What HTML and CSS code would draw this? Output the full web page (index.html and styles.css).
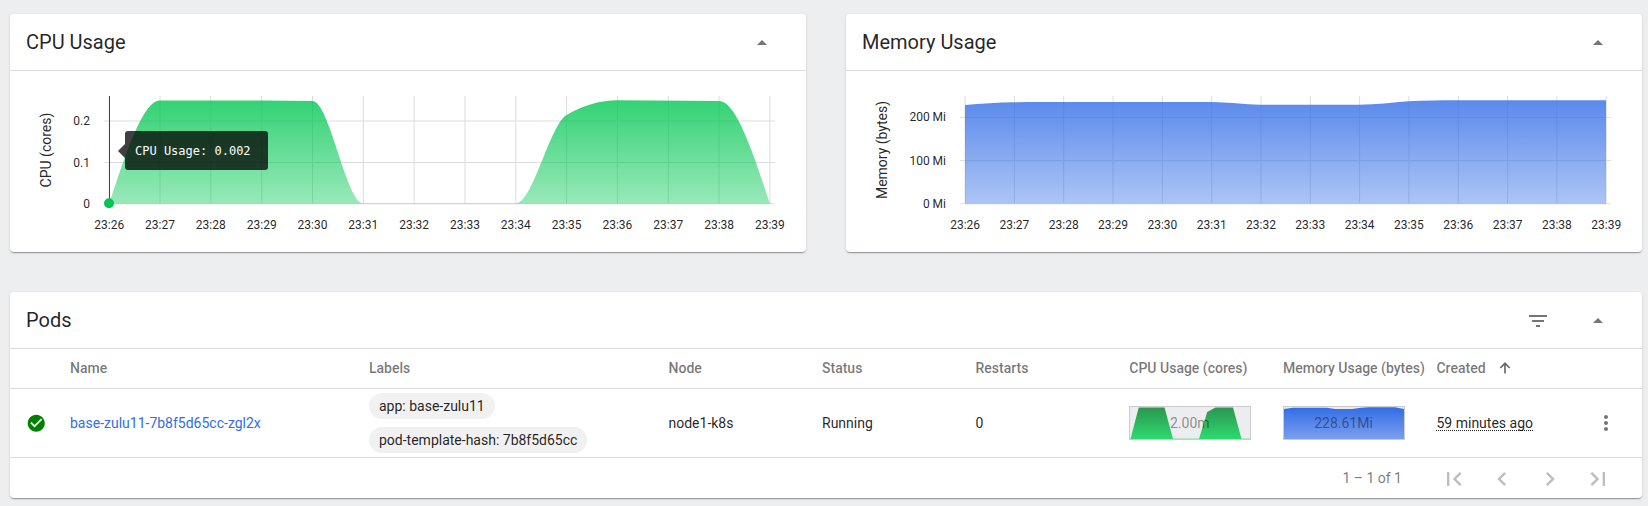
FILE: index.html
```html
<!DOCTYPE html>
<html lang="en">
<head>
<meta charset="utf-8">
<title>Pods</title>
<link rel="stylesheet" href="styles.css">
</head>
<body>
<main class="page">
  <div class="charts">
    <section class="card">
      <header class="card-header">
        <h2 class="title">CPU Usage</h2>
        <svg class="icon" viewBox="0 0 24 24"><path d="M7 14l5-5 5 5z"/></svg>
      </header>
      <div class="chart-body">
        <svg class="chart" id="cpu" viewBox="10 71 796 181">
          <defs><linearGradient id="cpuFill" x1="0" y1="0" x2="0" y2="1"><stop offset="0" stop-color="#00c752" stop-opacity=".8"/><stop offset="1" stop-color="#00c752" stop-opacity=".4"/></linearGradient></defs>
          <g class="grid"></g>
          <path fill="url(#cpuFill)" d="M109.2 203.8C126.2 152 143.2 100.5 160 100.5L261.7 100.5L312.5 101C329.4 101 346.4 203.3 363.3 203.3L515.8 203.3C532.7 203.3 549.7 124.8 566.6 115C583.5 105.2 600.5 100.3 617.4 100.3L719.1 101C736 101 753 152 769.9 203.8Z"/>
          <path class="cursor" d="M109.5 96V203"/>
          <circle cx="109" cy="203.2" r="5" fill="#00c752"/>
          <text class="axis" text-anchor="middle" transform="translate(51 150) rotate(-90)">CPU (cores)</text>
        </svg>
        <div class="tooltip">CPU Usage: 0.002</div>
      </div>
    </section>
    <section class="card">
      <header class="card-header">
        <h2 class="title">Memory Usage</h2>
        <svg class="icon" viewBox="0 0 24 24"><path d="M7 14l5-5 5 5z"/></svg>
      </header>
      <div class="chart-body">
        <svg class="chart" id="mem" viewBox="846 71 796 181">
          <defs><linearGradient id="memFill" x1="0" y1="0" x2="0" y2="1"><stop offset="0" stop-color="#326de6" stop-opacity=".8"/><stop offset="1" stop-color="#326de6" stop-opacity=".4"/></linearGradient></defs>
          <g class="grid"></g>
          <path fill="url(#memFill)" d="M965 105C981 103.500 998 102.600 1014.300 102.300C1031 102 1047 102 1063 102H1211.500C1228 102 1244.400 104.700 1260.800 104.700H1359.400C1376 104.700 1392 102.200 1408.700 101.200C1425 100.200 1441 100.200 1458 100.200H1606V203.800H965Z"/>
          <text class="axis" text-anchor="middle" transform="translate(887 150) rotate(-90)">Memory (bytes)</text>
        </svg>
      </div>
    </section>
  </div>

  <section class="card pods">
    <header class="card-header">
      <h2 class="title">Pods</h2>
      <svg class="icon filter" viewBox="0 0 24 24"><path d="M10 18h4v-2h-4v2zM3 6v2h18V6H3zm3 7h12v-2H6v2z"/></svg>
      <svg class="icon" viewBox="0 0 24 24"><path d="M7 14l5-5 5 5z"/></svg>
    </header>
    <div class="row head">
      <span></span><span>Name</span><span>Labels</span><span>Node</span><span>Status</span><span>Restarts</span><span>CPU Usage (cores)</span><span>Memory Usage (bytes)</span>
      <span class="sorted">Created<svg class="sort" viewBox="0 0 12 12"><path d="M6 11.500V2M1.300 6L6 1.300L10.700 6"/></svg></span><span></span>
    </div>
    <div class="row data">
      <svg class="ok" viewBox="0 0 24 24"><path d="M12 2C6.480 2 2 6.480 2 12s4.480 10 10 10 10-4.480 10-10S17.520 2 12 2zm-2 15l-5-5 1.410-1.410L10 14.170l7.590-7.590L19 8l-9 9z"/></svg>
      <a class="link">base-zulu11-7b8f5d65cc-zgl2x</a>
      <div class="chips"><span class="chip">app: base-zulu11</span><span class="chip">pod-template-hash: 7b8f5d65cc</span></div>
      <span>node1-k8s</span><span>Running</span><span>0</span>
      <div class="spark">
        <svg viewBox="0 0 120 32" preserveAspectRatio="none">
          <defs><linearGradient id="s1" x1="0" y1="0" x2="0" y2="1"><stop offset="0" stop-color="#2c9650"/><stop offset="1" stop-color="#2dd96e"/></linearGradient></defs>
          <path d="M42 31.500H120" stroke="#b5e8c8" stroke-width="1"/>
          <path fill="url(#s1)" d="M.5 32L8.700 .5H34.500L43 32ZM69 32L77.200 5L85.500 .5H103L111.500 32Z"/>
        </svg>
        <span class="spark-text">2.00m</span>
      </div>
      <div class="spark">
        <svg viewBox="0 0 120 32" preserveAspectRatio="none">
          <defs><linearGradient id="s2" x1="0" y1="0" x2="0" y2="1"><stop offset="0" stop-color="#326de6"/><stop offset="1" stop-color="#7b9fee"/></linearGradient></defs>
          <path fill="url(#s2)" d="M0 2L9 .8H43L51 2H68L77 .8L85 .3H111L120 2V32H0Z"/>
        </svg>
        <span class="spark-text">228.61Mi</span>
      </div>
      <span><span class="ago">59 minutes ago</span></span>
      <svg class="icon more" viewBox="0 0 24 24"><path d="M12 8c1.100 0 2-.9 2-2s-.9-2-2-2-2 .9-2 2 .9 2 2 2zm0 2c-1.100 0-2 .9-2 2s.9 2 2 2 2-.9 2-2-.9-2-2-2zm0 6c-1.100 0-2 .9-2 2s.9 2 2 2 2-.9 2-2-.9-2-2-2z"/></svg>
    </div>
    <footer class="pager">
      <span class="range">1 – 1 of 1</span>
      <svg viewBox="0 0 24 24"><path d="M18.410 16.590L13.820 12l4.590-4.590L17 6l-6 6 6 6zM6 6h2v12H6z"/></svg>
      <svg viewBox="0 0 24 24"><path d="M15.410 7.410L14 6l-6 6 6 6 1.410-1.410L10.830 12z"/></svg>
      <svg viewBox="0 0 24 24"><path d="M10 6L8.590 7.410 13.170 12l-4.580 4.590L10 18l6-6z"/></svg>
      <svg viewBox="0 0 24 24"><path d="M5.590 7.410L10.180 12l-4.590 4.590L7 18l6-6-6-6zM16 6h2v12h-2z"/></svg>
    </footer>
  </section>
</main>
<script src="charts.js"></script>
</body>
</html>
```
FILE: styles.css
```css
* { box-sizing: border-box; }
body {
  margin: 0;
  background: #edeef0;
  color: rgba(0, 0, 0, .87);
  font: 14px/20px Roboto, sans-serif;
}
.page { padding: 14px 6px 8px 10px; height: 506px; overflow: hidden; }
.charts { display: grid; grid-template-columns: 1fr 1fr; gap: 40px; margin-bottom: 40px; }
.card {
  background: #fff;
  border-radius: 4px;
  box-shadow: 0 2px 1px -1px rgba(0, 0, 0, .2), 0 1px 1px rgba(0, 0, 0, .14), 0 1px 3px rgba(0, 0, 0, .12);
}
.card-header {
  display: flex;
  align-items: center;
  height: 57px;
  padding: 1px 32px 0 16px;
  border-bottom: 1px solid #ddd;
}
.title { margin: 0; padding-bottom: 2px; flex: 1; font-size: 20px; font-weight: 400; line-height: 24px; }
.icon { width: 24px; height: 24px; fill: #757575; display: block; }
.filter { margin-right: 36px; }
.chart-body { position: relative; height: 181px; }
.chart { display: block; width: 796px; height: 181px; }
.chart text { font-size: 12px; fill: rgba(0, 0, 0, .87); }
.chart .axis { font-size: 14px; }
.grid path { stroke: #ddd; fill: none; }
.cursor { stroke: #424242; }
.tooltip {
  position: absolute;
  left: 115px;
  top: 60px;
  width: 143px;
  height: 39px;
  padding-left: 10px;
  border-radius: 3px;
  background: rgba(0, 0, 0, .75);
  color: #fff;
  font: 12px/41px "DejaVu Sans Mono", monospace;
  white-space: pre;
}
.tooltip::before {
  content: "";
  position: absolute;
  right: 100%;
  top: 13px;
  border: solid transparent;
  border-width: 7px 7px 7px 0;
  border-right-color: rgba(0, 0, 0, .75);
}
.row {
  display: grid;
  grid-template-columns: 44px 299px 299.500px 153.500px 153.500px 153.800px 153.700px 153.500px 157.500px 24px;
  align-items: center;
  padding-left: 16px;
  border-bottom: 1px solid #ddd;
  white-space: nowrap;
}
.head { height: 40px; padding-bottom: 2px; color: rgba(0, 0, 0, .54); font-weight: 500; }
.data { height: 69px; }
.sorted { display: flex; align-items: center; gap: 13px; }
.sort { width: 12px; height: 12px; fill: none; stroke: #6b6b6b; stroke-width: 1.700; }
.ok { width: 20.500px; height: 20.500px; fill: #008000; }
.link { color: #326de6; }
.chips { display: flex; flex-direction: column; align-items: flex-start; gap: 8px; }
.chip { height: 26px; line-height: 26px; padding: 0 10px; border-radius: 13px; background: #f1f1f1; }
.spark { position: relative; width: 122px; height: 34px; border: 1px solid #ccc; background: #ecedf0; }
.spark svg { display: block; width: 120px; height: 32px; }
.spark-text { position: absolute; inset: 0 1px 0 0; text-align: center; line-height: 32px; color: rgba(0, 0, 0, .43); }
.ago { border-bottom: 1px dotted #222; line-height: 14px; display: inline-block; height: 15px; }
.pager { display: flex; align-items: center; justify-content: flex-end; height: 40px; padding: 1px 30px 0 0; gap: 20px; }
.pager svg { width: 28px; height: 28px; fill: #bdbdbd; }
.range { margin-right: 18px; padding-bottom: 1px; color: rgba(0, 0, 0, .54); }
```
FILE: charts.js
```js
// Draws grid lines and tick labels for both charts.
function drawAxes(id, x0, x1, ticks, labelX) {
  const grid = document.querySelector('#' + id + ' .grid');
  const step = (x1 - x0) / 13;
  let out = '';
  for (let i = 0; i < 14; i++) {
    const x = (x0 + i * step).toFixed(1);
    out += `<path d="M${x} 96V204"/><text x="${x}" y="228.500" text-anchor="middle">23:${26 + i}</text>`;
  }
  for (const [y, label] of ticks) {
    out += `<path d="M${x0 - 5} ${y}H${x1 + 5}"/><text x="${labelX}" y="${y + 4}" text-anchor="end">${label}</text>`;
  }
  grid.innerHTML = out;
}
drawAxes('cpu', 109.2, 769.9, [[121, '0.2'], [162.5, '0.1'], [203.8, '0']], 90);
drawAxes('mem', 965.1, 1606.2, [[117.4, '200 Mi'], [160.6, '100 Mi'], [203.8, '0 Mi']], 946);
```
